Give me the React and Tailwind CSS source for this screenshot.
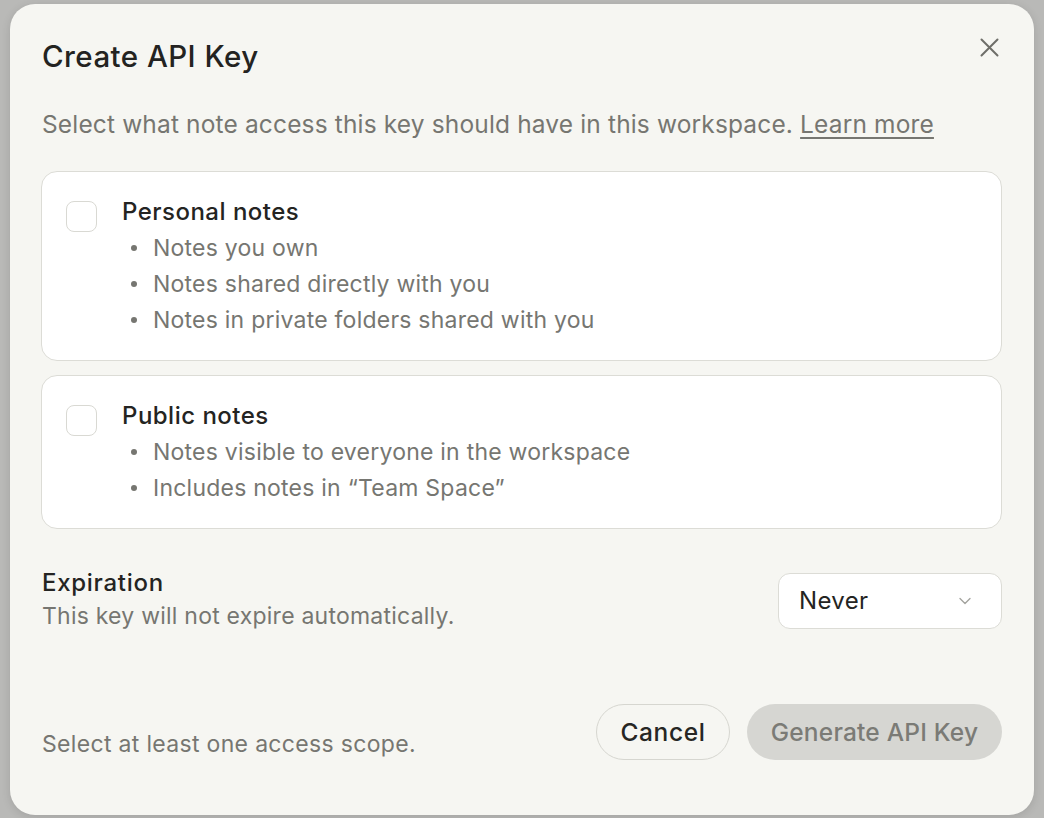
import { ChevronDown } from 'lucide-react'

const SCOPES = [
  {
    id: 'personal',
    title: 'Personal notes',
    items: ['Notes you own', 'Notes shared directly with you', 'Notes in private folders shared with you'],
  },
  {
    id: 'public',
    title: 'Public notes',
    items: ['Notes visible to everyone in the workspace', 'Includes notes in “Team Space”'],
  },
]

function ScopeCard({ scope }) {
  return (
    <div className="flex rounded-[16px] border border-[#dcdcd6] bg-white px-6 py-[22px]">
      <div className="mt-[7px] h-[31px] w-[31px] shrink-0 rounded-[8px] border-[1.5px] border-[#d9d9d3] bg-white" />
      <div className="ml-[25px]">
        <p className="text-[24px] leading-[36px] font-medium tracking-[0.02em] text-[#242422]">{scope.title}</p>
        <ul>
          {scope.items.map(item => (
            <li key={item} className="flex items-center text-[23px] leading-[36px] tracking-[0.01em] text-[#767671]">
              <span className="ml-[9px] mr-[16px] h-[6px] w-[6px] rounded-full bg-[#767671]" />
              {item}
            </li>
          ))}
        </ul>
      </div>
    </div>
  )
}

export default function App() {
  return (
    <div className="h-[818px] w-[1044px] overflow-hidden bg-[#b9b9b7] pl-[10px] pt-[4px]" style={{ fontFamily: 'Inter, "Noto Sans", sans-serif' }}>
      <div className="relative h-[811px] w-[1024px] rounded-[25px] bg-[#f6f6f2] pl-[31px] pr-8 pt-[34px] shadow-[0_2px_10px_rgba(0,0,0,0.12)]">
        {/* Close */}
        <button className="absolute right-[35px] top-[34px] text-[#6e6e69]">
          <svg width="19" height="19" viewBox="0 0 19 19" fill="none" stroke="currentColor" strokeWidth="2" strokeLinecap="round">
            <path d="M1.5 1.5l16 16M17.5 1.5l-16 16" />
          </svg>
        </button>

        <h1 className="ml-px text-[29.5px] leading-[36px] font-medium tracking-[0.015em] text-[#232321]">Create API Key</h1>
        <p className="ml-px mt-[34px] text-[24.5px] leading-[32px] tracking-[0.006em] text-[#767671]">
          Select what note access this key should have in this workspace.{' '}
          <span className="underline decoration-[1.5px] underline-offset-[4px]">Learn more</span>
        </p>

        <div className="mt-[31px] flex flex-col gap-[14px]">
          {SCOPES.map(s => (
            <ScopeCard key={s.id} scope={s} />
          ))}
        </div>

        {/* Expiration */}
        <div className="ml-px mt-[40px] flex items-center justify-between">
          <div>
            <p className="text-[24px] leading-[28px] font-medium tracking-[0.03em] text-[#242422]">Expiration</p>
            <p className="mt-[3px] text-[23px] leading-[32px] tracking-[0.01em] text-[#767671]">This key will not expire automatically.</p>
          </div>
          <button className="flex h-[56px] w-[224px] items-center justify-between rounded-[12px] border border-[#dcdcd6] bg-white pl-5 pr-[26px] text-[24px] tracking-[0.015em] text-[#242422]">
            Never
            <ChevronDown size={20} strokeWidth={1.6} className="text-[#a3a39e]" />
          </button>
        </div>

        {/* Footer */}
        <div className="ml-px mt-[72px] flex items-end justify-between">
          <p className="text-[23px] leading-[32px] tracking-[0.014em] text-[#767671]">Select at least one access scope.</p>
          <div className="flex gap-[17px]">
            <button className="h-[56px] w-[134px] rounded-full border border-[#d6d6d0] text-[24.5px] font-medium tracking-[0.025em] text-[#262624]">Cancel</button>
            <button disabled className="h-[56px] w-[255px] rounded-full bg-[#d6d6d2] text-[24.5px] font-medium tracking-[0.008em] text-[#7b7b76]">Generate API Key</button>
          </div>
        </div>
      </div>
    </div>
  )
}
